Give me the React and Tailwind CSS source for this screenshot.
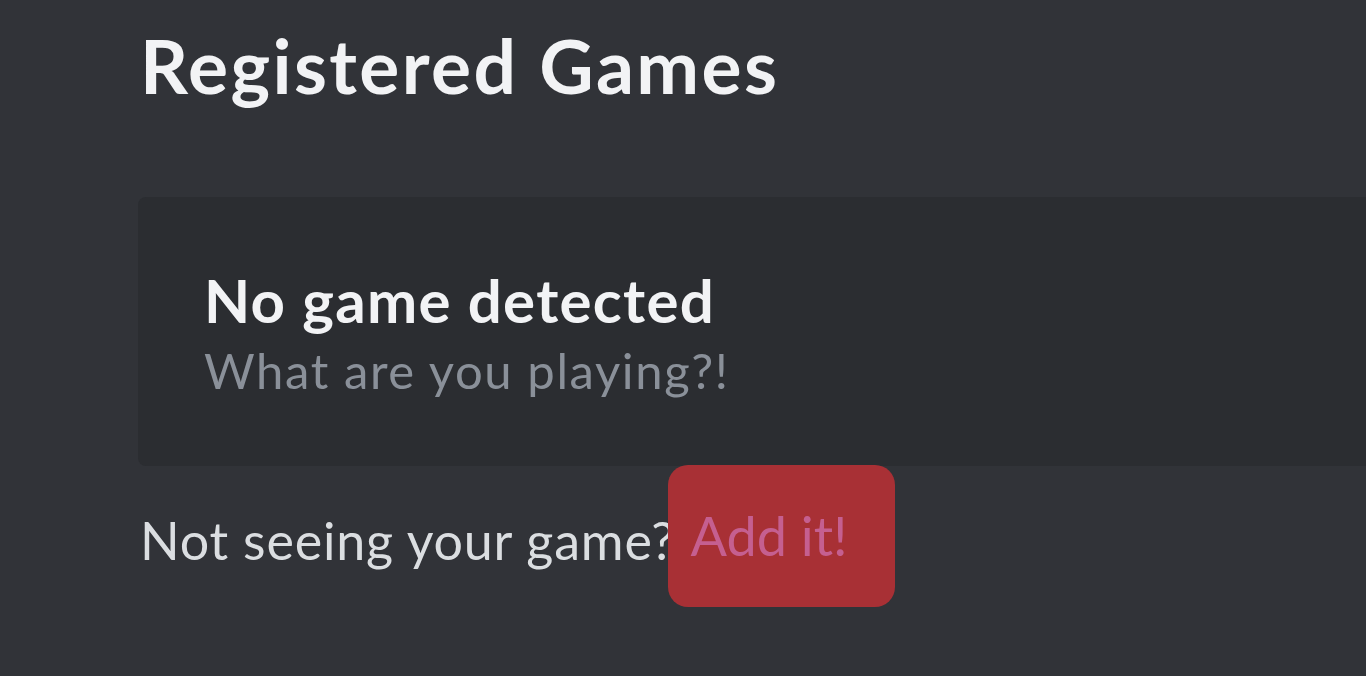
export default function App() {
  return (
    <div className="min-h-screen h-[676px] overflow-hidden bg-[#313338] pl-[140px] pt-[20px]" style={{ fontFamily: 'Lato, "Noto Sans", sans-serif' }}>
      <h1 className="text-[75px] leading-[90px] font-bold text-[#f2f3f5] tracking-[2.4px]">Registered Games</h1>
      <div className="mt-[87px] -ml-[2px] h-[269px] rounded-l-lg bg-[#2b2d31] pl-[66px] pt-[68px]">
        <div className="text-[60px] leading-[70px] font-bold text-[#f2f3f5] tracking-[1.3px]">No game detected</div>
        <div className="mt-[5px] text-[49px] leading-[60px] text-[#8a9099] tracking-[1.6px]">What are you playing?!</div>
      </div>
      <div className="flex items-start">
        <span className="mt-[43px] text-[52px] leading-[62px] text-[#dbdee1] tracking-[0.8px]">Not seeing your game?</span>
        <div className="ml-[-7px] mt-[-1px] w-[227px] h-[142px] rounded-[20px] bg-[#a83035] pl-[22px] pt-[39px]">
          <span className="text-[54px] leading-[64px] text-[#c55f90]">Add it!</span>
        </div>
      </div>
    </div>
  )
}
